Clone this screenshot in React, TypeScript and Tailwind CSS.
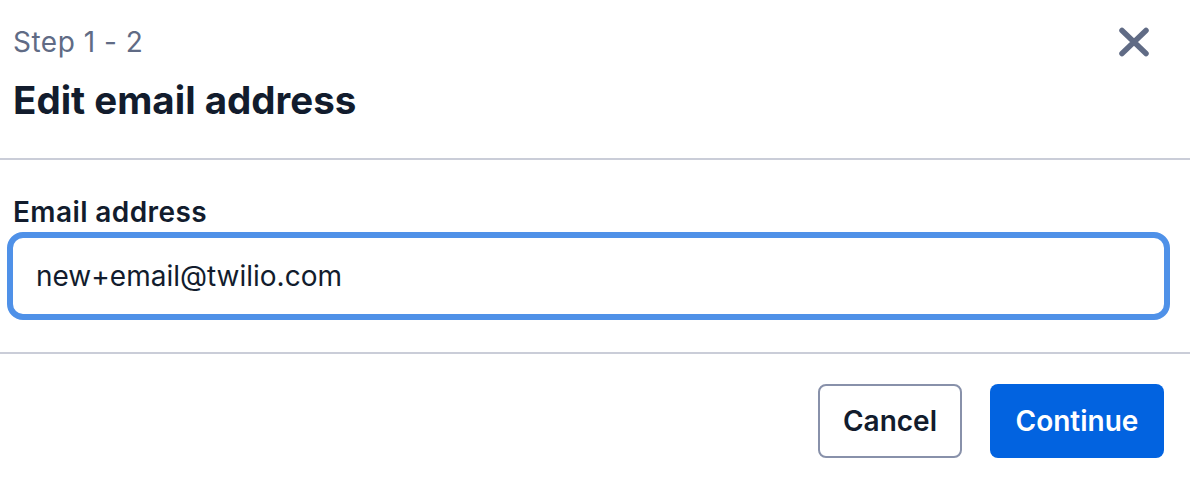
import React from "react";

export default function App() {
  return (
    <div
      className="w-[1190px] h-[488px] bg-white overflow-hidden flex flex-col"
      style={{ fontFamily: "Inter, 'Noto Sans', sans-serif" }}
    >
      {/* Header */}
      <div className="flex items-start justify-between h-[158px]">
        <div className="pl-[13px] pt-[22px] flex flex-col gap-[18px]">
          <div className="text-[28px] leading-[40px] tracking-[0.5px] text-[#606b85]">Step 1 - 2</div>
          <h2 className="text-[38.5px] leading-[40px] font-bold text-[#121c2d]">Edit email address</h2>
        </div>
        <button className="mt-[27px] mr-[40px]" aria-label="Close">
          <svg width="32" height="30" viewBox="0 0 32 30">
            <path d="M4 3.5 L28 26.5 M28 3.5 L4 26.5" stroke="#606b85" strokeWidth="5.5" strokeLinecap="round" />
          </svg>
        </button>
      </div>
      <div className="h-[2px] bg-[#cacdd8]" />

      {/* Body */}
      <div className="pt-[32px] pb-[32px] flex flex-col">
        <label className="pl-[13px] text-[28px] leading-[40px] tracking-[0.4px] font-semibold text-[#121c2d]">
          Email address
        </label>
        <div className="ml-[7px] w-[1163px] h-[88px] border-[6px] border-[#4f91e8] rounded-[16px] flex items-center px-[23px]">
          <span className="text-[28px] leading-[40px] text-[#121c2d]">new+email@twilio.com</span>
        </div>
      </div>
      <div className="h-[2px] bg-[#cacdd8]" />

      {/* Footer */}
      <div className="flex justify-end gap-[28px] pt-[30px] pr-[26px]">
        <button className="w-[144px] h-[74px] border-2 border-[#8891aa] rounded-[8px] text-[28px] font-semibold text-[#121c2d] flex items-center justify-center">
          Cancel
        </button>
        <button className="w-[174px] h-[74px] bg-[#0263e0] rounded-[8px] text-[28px] font-semibold text-white flex items-center justify-center">
          Continue
        </button>
      </div>
    </div>
  );
}
